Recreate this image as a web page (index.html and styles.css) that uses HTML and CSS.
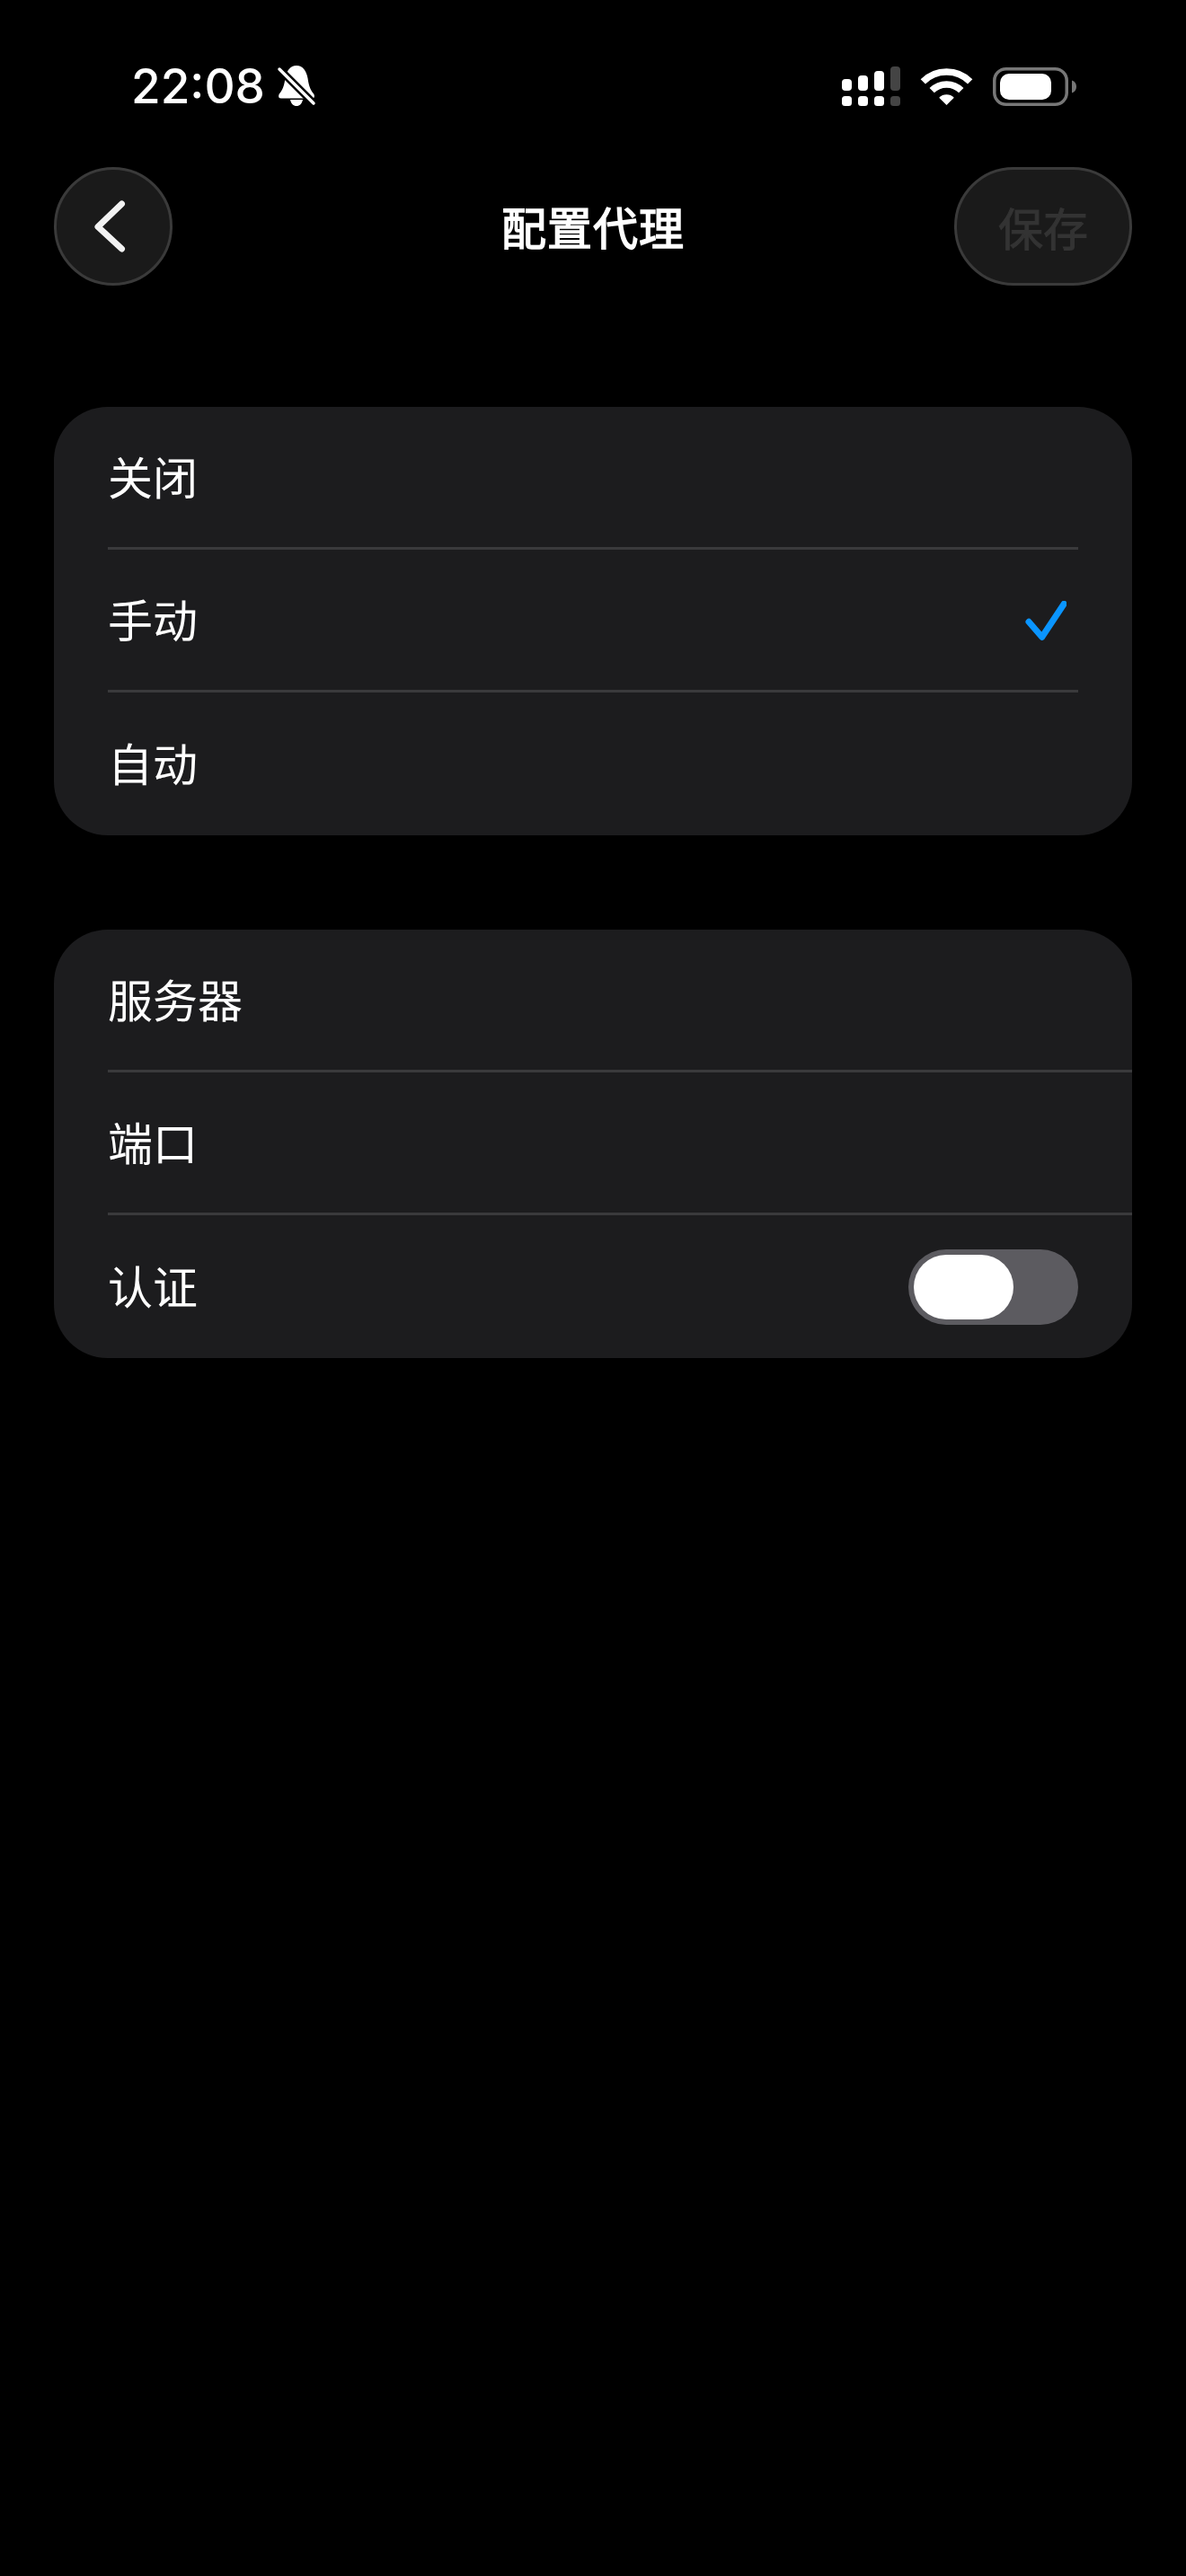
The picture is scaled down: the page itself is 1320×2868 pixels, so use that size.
FILE: index.html
```html
<!DOCTYPE html>
<html lang="zh-CN">
<head>
    <meta charset="UTF-8">
    <meta name="viewport" content="width=device-width, initial-scale=1.0">
    <title>配置代理</title>
    <link rel="stylesheet" href="styles.css">
</head>
<body>
    <div class="status-bar">
        <div class="status-left">
            <span class="time">22:08</span>
            <svg class="bell" width="42" height="45" viewBox="0 0 42 45">
                <path fill="#fff" d="M21 -1C28 -1 32 5 33.500 13C34.500 20 36 26 40.500 31Q42 35.500 38 35.500L4 35.500Q0 35.500 1.500 31C6 26 7.500 20 8.500 13C10 5 14 -1 21 -1Z"/>
                <path fill="#fff" d="M14 37H28C27 41.500 24.500 44 21 44C17.500 44 15 41.500 14 37Z"/>
                <path stroke="#000" stroke-width="8.500" d="M-2 -1L44 45"/>
                <path stroke="#fff" stroke-width="3.500" stroke-linecap="round" d="M2 3L40 41"/>
            </svg>
        </div>
        <div class="status-right">
            <svg width="66" height="45" viewBox="0 0 66 45">
                <rect x="1" y="14" width="11" height="13" rx="4" fill="#fff"/>
                <rect x="19" y="10" width="11" height="17" rx="4" fill="#fff"/>
                <rect x="37" y="5" width="11" height="22" rx="4" fill="#fff"/>
                <rect x="55" y="0" width="11" height="27" rx="4" fill="#444"/>
                <rect x="1" y="33" width="11" height="11" rx="3.5" fill="#fff"/>
                <rect x="19" y="33" width="11" height="11" rx="3.5" fill="#fff"/>
                <rect x="37" y="33" width="11" height="11" rx="3.5" fill="#fff"/>
                <rect x="55" y="33" width="11" height="11" rx="3.5" fill="#444"/>
            </svg>
            <svg width="57" height="41" viewBox="0 0 57 41">
                <path fill="none" stroke="#fff" stroke-width="7.5" d="M2.3 14.8A37 37 0 0 1 54.7 14.8"/>
                <path fill="none" stroke="#fff" stroke-width="7.5" d="M12.2 24.7A23 23 0 0 1 44.8 24.7"/>
                <path fill="#fff" d="M28.5 41L20.2 32.7A11.7 11.7 0 0 1 36.8 32.7Z"/>
            </svg>
            <svg width="93" height="43" viewBox="0 0 93 43">
                <rect x="1.75" y="1.75" width="80.5" height="39.5" rx="13" fill="none" stroke="#777" stroke-width="3.5"/>
                <rect x="8" y="7" width="57" height="29" rx="10" fill="#fff"/>
                <path fill="#777" d="M88 14.5C91 15.5 93 18 93 21.5C93 25 91 27.5 88 28.5Z"/>
            </svg>
        </div>
    </div>

    <div class="header">
        <button class="back-btn">
            <svg width="36" height="58" viewBox="0 0 36 58">
                <path fill="none" stroke="#f2f2f2" stroke-width="7" stroke-linecap="round" stroke-linejoin="round" d="M31.5 4L5 29.5L31.5 54"/>
            </svg>
        </button>
        <h1 class="title">配置代理</h1>
        <button class="save-btn">保存</button>
    </div>

    <div class="card card-inset">
        <div class="row"><span>关闭</span></div>
        <div class="row">
            <span>手动</span>
            <svg class="check" width="46" height="44" viewBox="0 0 46 44">
                <path fill="none" stroke="#0a95ff" stroke-width="7" stroke-linecap="round" stroke-linejoin="round" d="M4 23.3L18.7 40.3L43.3 3.3"/>
            </svg>
        </div>
        <div class="row"><span>自动</span></div>
    </div>

    <div class="card">
        <div class="row"><span>服务器</span></div>
        <div class="row"><span>端口</span></div>
        <div class="row">
            <span>认证</span>
            <div class="toggle"><div class="knob"></div></div>
        </div>
    </div>
</body>
</html>
```

FILE: styles.css
```css
body {
    background-color: #000;
    color: #fff;
    margin: 0;
    height: 2868px;
    overflow: hidden;
    font-family: "Noto Sans CJK SC", "Noto Sans", sans-serif;
}

.status-bar {
    display: flex;
    justify-content: space-between;
    align-items: center;
    box-sizing: border-box;
    height: 186px;
    padding: 6px 122px 0 146px;
}
.status-left {
    display: flex;
    align-items: center;
    gap: 14px;
}
.status-right {
    display: flex;
    align-items: center;
    gap: 23px;
}
.time {
    font-family: Inter, "Liberation Sans", sans-serif;
    font-size: 53px;
    font-weight: 500;
    line-height: 60px;
}
.status-bar svg {
    display: block;
    overflow: visible;
}

.header {
    display: grid;
    grid-template-columns: 1fr auto 1fr;
    align-items: center;
    padding: 0 60px;
}
.back-btn, .save-btn {
    box-sizing: border-box;
    height: 132px;
    background-color: #1a1a1a;
    border: 3px solid #3a3a3a;
    border-radius: 66px;
    padding: 0;
    display: flex;
    justify-content: center;
    align-items: center;
}
.back-btn {
    width: 132px;
    justify-self: start;
}
.back-btn svg {
    margin-right: 8px;
}
.save-btn {
    width: 198px;
    justify-self: end;
    color: #333;
    font-family: inherit;
    font-size: 50px;
    font-weight: 400;
    -webkit-text-stroke: 1px #333;
}
.title {
    margin: 0;
    padding-bottom: 3px;
    font-size: 50px;
    font-weight: 400;
    letter-spacing: 1px;
    -webkit-text-stroke: 1.5px #fff;
}

.card {
    background-color: #1c1c1e;
    border-radius: 60px;
    margin: 135px 60px 0;
    padding-left: 60px;
    overflow: hidden;
}
.card + .card {
    margin-top: 105px;
}
.row {
    display: flex;
    justify-content: space-between;
    align-items: center;
    box-sizing: border-box;
    height: 159px;
    padding-right: 60px;
    border-bottom: 3px solid #3a3a3c;
    font-size: 50px;
    font-weight: 400;
}
.row span {
    padding-bottom: 5px;
}
.row:last-child {
    border-bottom: none;
}
.card-inset .row {
    margin-right: 60px;
    padding-right: 0;
}
.check {
    margin: 2px 13px 0 0;
}

.toggle {
    box-sizing: border-box;
    width: 189px;
    height: 84px;
    padding: 6px;
    background-color: #5c5b60;
    border-radius: 42px;
}
.knob {
    width: 111px;
    height: 72px;
    background-color: #fff;
    border-radius: 36px;
}
```
